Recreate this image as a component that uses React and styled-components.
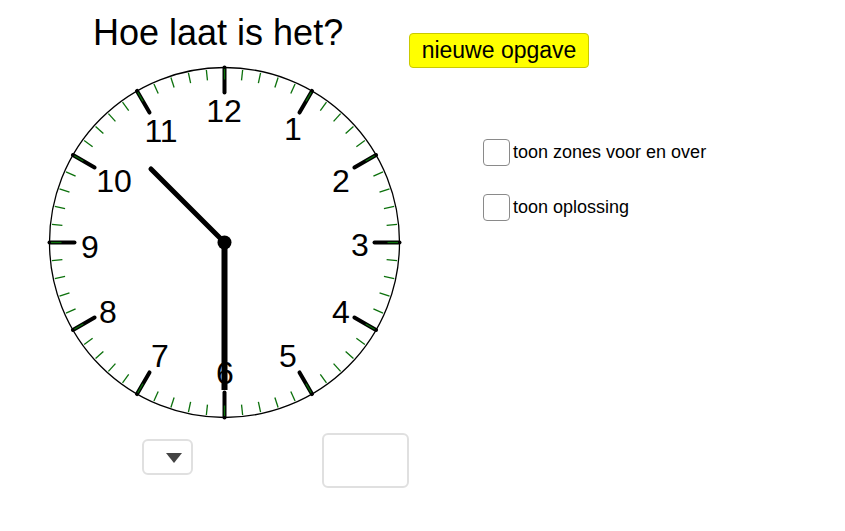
import React from "react";
import styled, { createGlobalStyle } from "styled-components";

const GlobalStyle = createGlobalStyle`
  html, body {
    margin: 0;
    padding: 0;
    background: #fff;
  }
  body {
    font-family: "Liberation Sans", Arial, sans-serif;
  }
`;

const Page = styled.div`
  width: 845px;
  height: 531px;
  display: flex;
  align-items: flex-start;
  overflow: hidden;
`;

const LeftColumn = styled.div`
  width: 369px;
  margin-left: 40px;
  display: flex;
  flex-direction: column;
`;

const Title = styled.h1`
  margin: 0;
  height: 60px;
  box-sizing: border-box;
  padding: 6px 0 0 53px;
  line-height: 54px;
  font-size: 36px;
  font-weight: normal;
  color: #000;
  white-space: nowrap;
`;

const ClockSvg = styled.svg`
  display: block;
  width: 369px;
  height: 370px;
  overflow: visible;
`;

const BottomRow = styled.div`
  display: flex;
  align-items: flex-start;
`;

const Dropdown = styled.div`
  width: 52px;
  height: 36px;
  margin: 9px 0 0 102px;
  box-sizing: border-box;
  border: 2px solid #e0e0e0;
  border-radius: 6px;
  display: flex;
  align-items: center;
  justify-content: flex-end;
  padding-right: 9px;
`;

const Arrow = styled.span`
  width: 0;
  height: 0;
  border-left: 8px solid transparent;
  border-right: 8px solid transparent;
  border-top: 10px solid #444;
  margin-top: 2px;
`;

const AnswerInput = styled.div`
  width: 88px;
  height: 55px;
  margin: 3px 0 0 129px;
  box-sizing: border-box;
  border: 2px solid #e0e0e0;
  border-radius: 6px;
`;

const RightColumn = styled.div`
  display: flex;
  flex-direction: column;
  padding-top: 33px;
`;

const NewButton = styled.button`
  width: 180px;
  height: 35px;
  box-sizing: border-box;
  background: #ffff00;
  border: 1px solid #c9c900;
  border-radius: 4px;
  font-family: "Liberation Sans", Arial, sans-serif;
  font-size: 23px;
  color: #000;
  padding: 0;
  line-height: 31px;
  cursor: pointer;
`;

const Options = styled.div`
  margin-top: 71px;
  padding-left: 74px;
  display: flex;
  flex-direction: column;
  gap: 29px;
`;

const OptionRow = styled.label`
  display: flex;
  align-items: center;
  height: 26px;
  font-size: 18px;
  color: #000;
  white-space: nowrap;
`;

const Box = styled.span`
  width: 27px;
  height: 27px;
  box-sizing: border-box;
  border: 1.5px solid #8a8a8a;
  border-radius: 4px;
  margin-right: 3px;
  background: #fff;
`;

const CX = 184.5;
const CY = 182.5;
const R = 175;

const numbers = [
  { n: "12", x: 184, y: 50 },
  { n: "1", x: 253, y: 68 },
  { n: "2", x: 301, y: 120 },
  { n: "3", x: 320, y: 184 },
  { n: "4", x: 301, y: 251 },
  { n: "5", x: 248, y: 295 },
  { n: "6", x: 185, y: 312 },
  { n: "7", x: 120, y: 295 },
  { n: "8", x: 68, y: 251 },
  { n: "9", x: 50, y: 186 },
  { n: "10", x: 74, y: 120 },
  { n: "11", x: 121, y: 70 },
];

const point = (deg, r) => {
  const a = (deg * Math.PI) / 180;
  return [CX + r * Math.sin(a), CY - r * Math.cos(a)];
};

const Clock = () => {
  const hourTicks = [];
  const minuteTicks = [];
  for (let i = 0; i < 12; i++) {
    const [x1, y1] = point(i * 30, 150);
    const [x2, y2] = point(i * 30, 175);
    hourTicks.push(
      <line key={i} x1={x1} y1={y1} x2={x2} y2={y2} stroke="#000" strokeWidth="4" strokeLinecap="round" />
    );
  }
  for (let i = 0; i < 60; i++) {
    const [x1, y1] = point(i * 6, 163);
    const [x2, y2] = point(i * 6, 173.5);
    minuteTicks.push(
      <line key={i} x1={x1} y1={y1} x2={x2} y2={y2} stroke="#0b700b" strokeWidth="1.3" />
    );
  }
  const [hx, hy] = point(-45, 104);

  return (
    <ClockSvg viewBox="0 0 369 370">
      <circle cx={CX} cy={CY} r={R} fill="#fff" stroke="#000" strokeWidth="1.3" />
      {hourTicks}
      {minuteTicks}
      <g fontFamily='"Liberation Sans", Arial, sans-serif' fontSize="32" textAnchor="middle" fill="#000">
        {numbers.map((d) => (
          <text key={d.n} x={d.x} y={d.y + 11.5}>
            {d.n}
          </text>
        ))}
      </g>
      <line x1={CX} y1={CY} x2={hx} y2={hy} stroke="#000" strokeWidth="5" strokeLinecap="round" />
      <line x1={CX} y1={CY} x2={CX} y2={330} stroke="#000" strokeWidth="6" />
      <circle cx={CX} cy={CY} r="7" fill="#000" />
    </ClockSvg>
  );
};

const App = () => {
  return (
    <Page>
      <GlobalStyle />
      <LeftColumn>
        <Title>Hoe laat is het?</Title>
        <Clock />
        <BottomRow>
          <Dropdown>
            <Arrow />
          </Dropdown>
          <AnswerInput />
        </BottomRow>
      </LeftColumn>
      <RightColumn>
        <NewButton>nieuwe opgave</NewButton>
        <Options>
          <OptionRow>
            <Box />
            toon zones voor en over
          </OptionRow>
          <OptionRow>
            <Box />
            toon oplossing
          </OptionRow>
        </Options>
      </RightColumn>
    </Page>
  );
};

export default App;
